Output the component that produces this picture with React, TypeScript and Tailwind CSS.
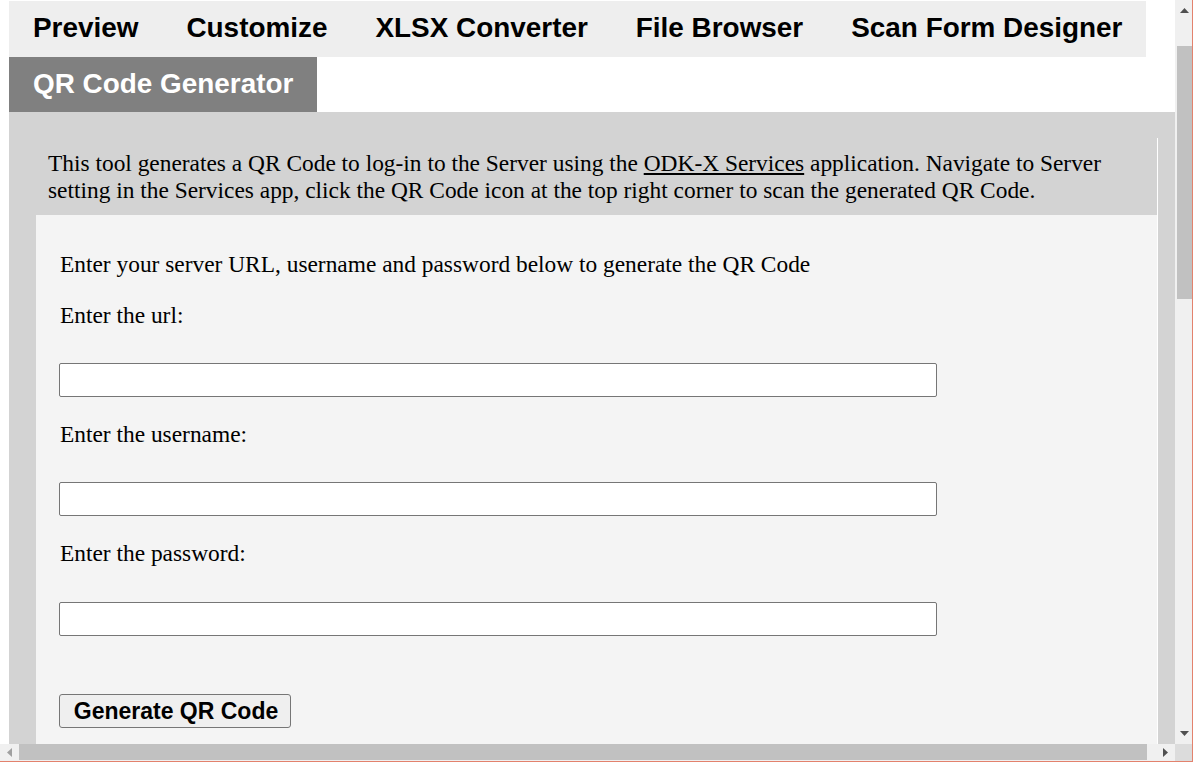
import React from "react";

const sans = { fontFamily: '"Liberation Sans", Arial, sans-serif' };
const serif = { fontFamily: '"Liberation Serif", "Times New Roman", serif' };

function Tab({ label, active }: { label: string; active?: boolean }) {
  return (
    <div
      className={
        "h-[55.5px] px-[24px] flex items-center text-[27.9px] font-bold leading-none " +
        (active ? "bg-[#808080] text-white" : "bg-[#eeeeee] text-black")
      }
    >
      <span className="-mt-[1px]">{label}</span>
    </div>
  );
}

function Field({ mt }: { mt: string }) {
  return <div className={"h-[34px] w-[878px] border border-[#767676] bg-white rounded-[2px] " + mt} />;
}

export default function App() {
  return (
    <div className="w-[1195px] h-[762px] overflow-hidden bg-white flex">
      <div className="w-[1192px] flex flex-col">
        <div className="flex h-[744px]">
          <div className="w-[1175px] h-[744px] overflow-hidden pl-[9px] pt-[1px] flex flex-col" style={sans}>
            <div className="flex flex-wrap w-[1157px]">
              <Tab label="Preview" />
              <Tab label="Customize" />
              <Tab label="XLSX Converter" />
              <Tab label="File Browser" />
              <Tab label="Scan Form Designer" />
              <Tab label="QR Code Generator" active />
            </div>
            <div className="flex-1 bg-[#d3d3d3] pl-[27px] pt-[26px]">
              <div className="w-[1122px] h-[700px] border-r border-white flex flex-col" style={serif}>
                <div className="px-[12px] py-[11.5px] text-[23.4px] leading-[27px] text-black whitespace-nowrap">
                  This tool generates a QR Code to log-in to the Server using the{" "}
                  <span className="underline">ODK-X Services</span> application. Navigate to Server
                  <br />
                  setting in the Services app, click the QR Code icon at the top right corner to scan the generated QR
                  Code.
                </div>
                <div className="flex-1 bg-[#f4f4f4] pl-[23px] pt-[37px] flex flex-col items-start text-[23.4px] leading-[24px] text-black">
                  <p className="pl-[1px]">Enter your server URL, username and password below to generate the QR Code</p>
                  <p className="pl-[1px] mt-[27px]">Enter the url:</p>
                  <Field mt="mt-[36px]" />
                  <p className="pl-[1px] mt-[25px]">Enter the username:</p>
                  <Field mt="mt-[36px]" />
                  <p className="pl-[1px] mt-[25px]">Enter the password:</p>
                  <Field mt="mt-[37px]" />
                  <button
                    className="mt-[58px] w-[232px] h-[34px] border border-[#767676] bg-[#efefef] rounded-[3px] text-[23px] font-bold leading-none text-black flex items-center justify-center"
                    style={sans}
                  >
                    <span className="pl-[2px]">Generate QR Code</span>
                  </button>
                </div>
              </div>
            </div>
          </div>
          {/* vertical scrollbar */}
          <div className="w-[17px] h-[744px] bg-[#f0f0f0] flex flex-col items-center">
            <div className="h-[17px] w-full flex items-center justify-center pl-[2px] mt-[2px]">
              <svg width="9" height="5" viewBox="0 0 9 5">
                <polygon points="4.5,0 9,5 0,5" fill="#505050" />
              </svg>
            </div>
            <div className="mt-[27px] ml-[2px] w-[15px] h-[253px] bg-[#c1c1c1]" />
            <div className="flex-1" />
            <div className="h-[17px] w-full flex items-center justify-center pl-[2px] -mt-[6px] mb-[2px]">
              <svg width="9" height="5" viewBox="0 0 9 5">
                <polygon points="0,0 9,0 4.5,5" fill="#505050" />
              </svg>
            </div>
          </div>
        </div>
        {/* horizontal scrollbar */}
        <div className="h-[17px] flex bg-[#f0f0f0]">
          <div className="w-[19px] h-full flex items-center justify-center">
            <svg width="5" height="9" viewBox="0 0 5 9">
              <polygon points="5,0 5,9 0,4.5" fill="#a0a0a0" />
            </svg>
          </div>
          <div className="w-[1128px] h-[16px] bg-[#c1c1c1]" />
          <div className="w-[28px] h-full flex items-center justify-center pl-[9px]">
            <svg width="5" height="9" viewBox="0 0 5 9">
              <polygon points="0,0 5,4.5 0,9" fill="#505050" />
            </svg>
          </div>
          <div className="w-[17px] h-full bg-[#dcdcdc]" />
        </div>
        <div className="h-[1px] bg-[#e3826d]" />
      </div>
      <div className="w-[1px] h-full bg-[#e3826d]" />
      <div className="w-[2px] h-full bg-white" />
    </div>
  );
}
